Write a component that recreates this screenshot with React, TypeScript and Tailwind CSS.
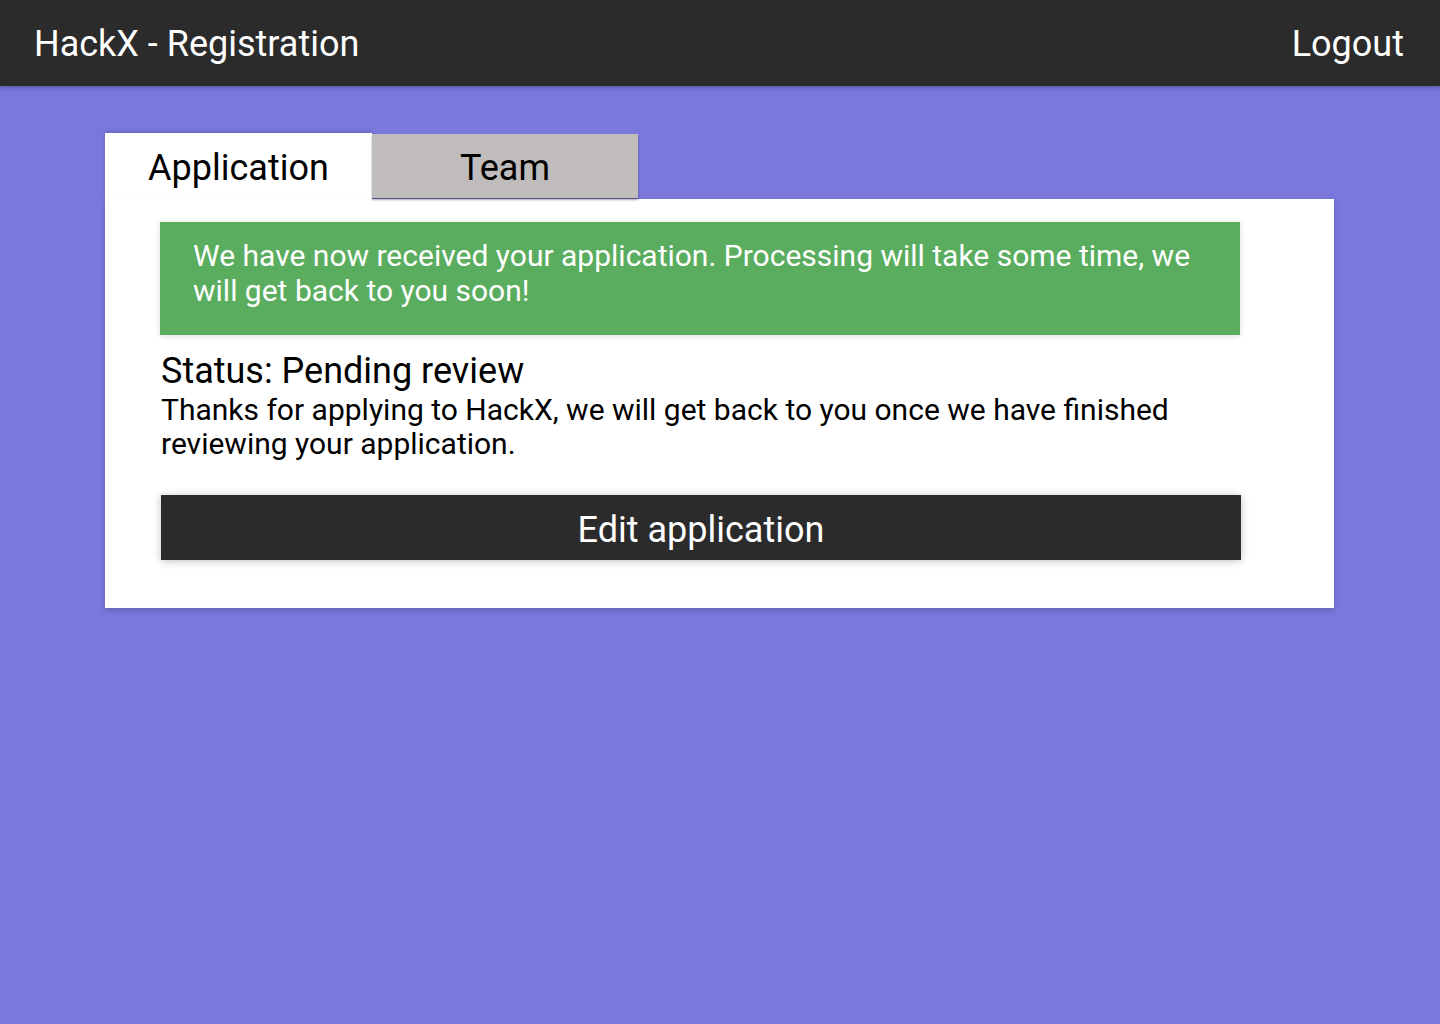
export default function App() {
  return (
    <div className="min-h-screen bg-[#7a78dd] font-['Roboto',sans-serif]">
      {/* top bar */}
      <header className="h-[86px] bg-[#2b2b2b] flex items-center justify-between pl-[34px] pr-[36px] pt-[2px] shadow-[0_2px_4px_rgba(0,0,0,0.25)]">
        <h1 className="text-[36px] text-white leading-none">HackX - Registration</h1>
        <button className="text-[36px] text-white leading-none">Logout</button>
      </header>

      <main className="pt-[47px] pl-[105px] pr-[106px]">
        {/* tabs */}
        <div className="flex">
          <div className="w-[267px] h-[66px] bg-white flex items-center justify-center pt-[3px] text-[36px] text-black shadow-[0_-2px_4px_rgba(0,0,0,0.15)]">
            Application
          </div>
          <div className="w-[266px] h-[64px] mt-px bg-[#c0bcbc] flex items-center justify-center pt-[4px] text-[36px] text-black shadow-[0_2px_2px_rgba(0,0,0,0.35)]">
            Team
          </div>
        </div>

        {/* card */}
        <div className="bg-white pt-[23px] pb-[48px] pl-[55px] shadow-[0_2px_6px_rgba(0,0,0,0.2)]">
          <div className="w-[1080px] bg-[#5aad5e] pl-[33px] pr-[40px] pt-[16px] pb-[27px] text-white text-[30px] leading-[35px] shadow-[0_1px_6px_rgba(0,0,0,0.15)]">
            We have now received your application. Processing will take some time, we will get back to you soon!
          </div>
          <div className="w-[1080px] pl-px mt-[16px] text-black">
            <h2 className="text-[36px] leading-[40px]">Status: Pending review</h2>
            <p className="mt-[2px] text-[30px] leading-[34px] pr-[60px]">
              Thanks for applying to HackX, we will get back to you once we have finished reviewing your application.
            </p>
          </div>
          <button className="mt-[34px] ml-px w-[1080px] h-[65px] pt-[4px] bg-[#2b2b2b] text-white text-[36px] shadow-[0_1px_8px_rgba(0,0,0,0.25)]">
            Edit application
          </button>
        </div>
      </main>
    </div>
  );
}
